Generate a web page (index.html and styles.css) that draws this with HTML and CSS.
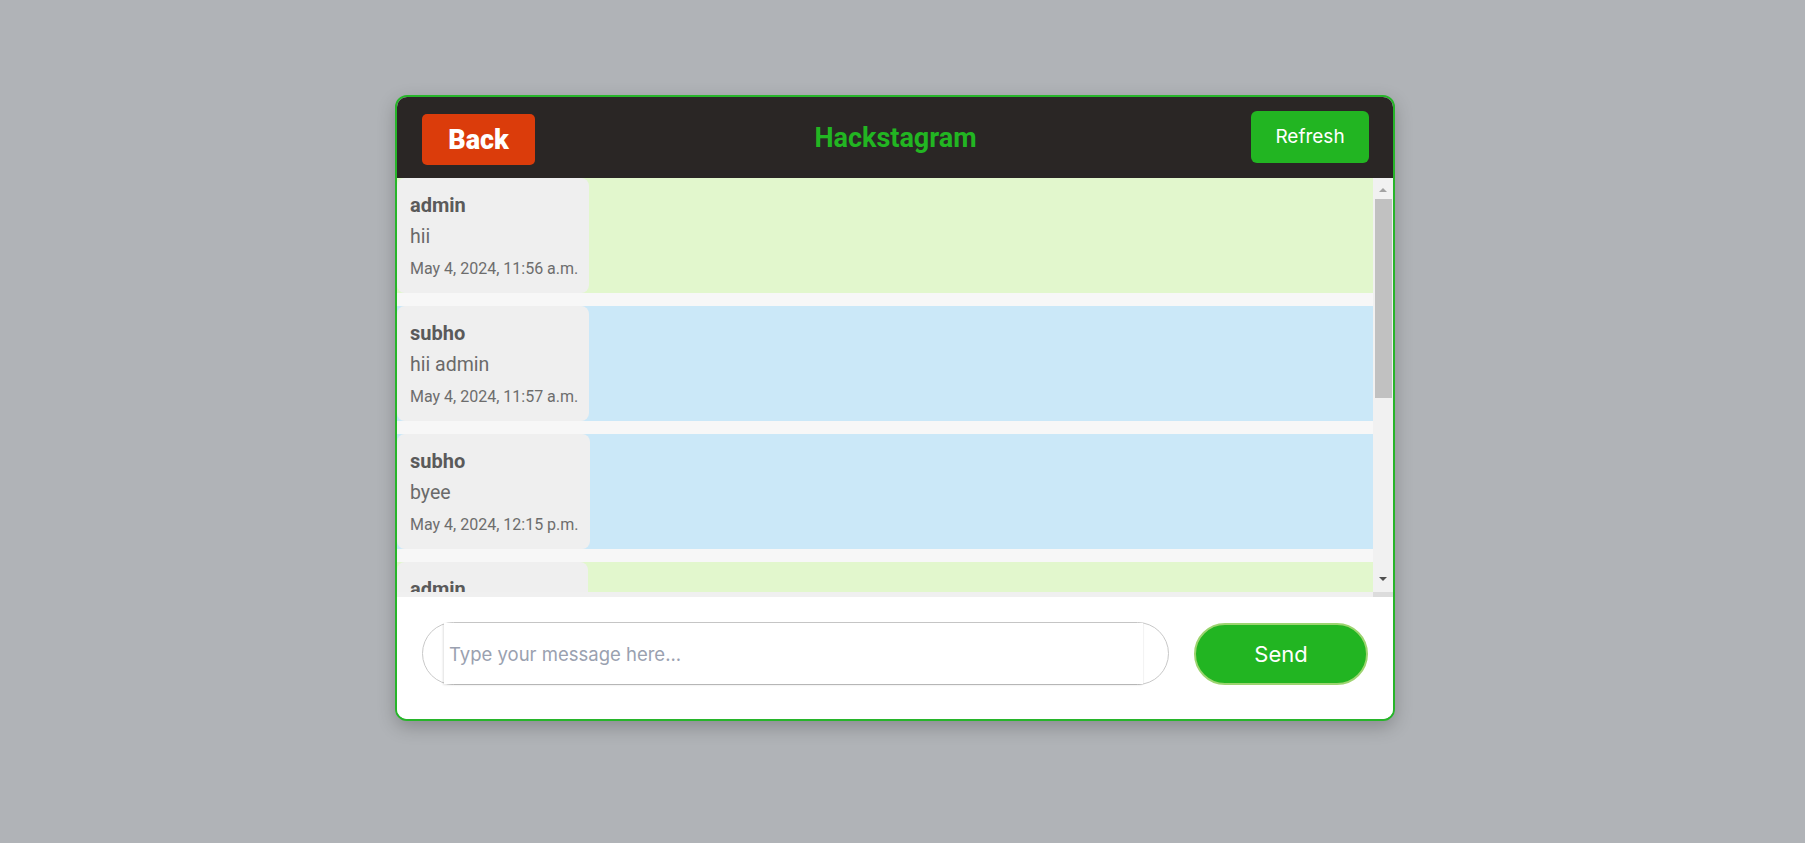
FILE: index.html
```html
<!DOCTYPE html>
<html lang="en">
<head>
<meta charset="utf-8">
<title>Hackstagram</title>
<link rel="stylesheet" href="styles.css">
</head>
<body>
<div class="chat">
  <header class="chat-header">
    <div class="hdr-left"><button class="btn-back">Back</button></div>
    <h1 class="title">Hackstagram</h1>
    <div class="hdr-right"><button class="btn-refresh">Refresh</button></div>
  </header>
  <div class="messages-wrap">
    <div class="messages-row">
      <div class="messages">
        <div class="msg msg-admin">
          <div class="card">
            <div class="user">admin</div>
            <div class="text">hii</div>
            <div class="time">May 4, 2024, 11:56 a.m.</div>
          </div>
        </div>
        <div class="msg msg-user">
          <div class="card">
            <div class="user">subho</div>
            <div class="text">hii admin</div>
            <div class="time">May 4, 2024, 11:57 a.m.</div>
          </div>
        </div>
        <div class="msg msg-user">
          <div class="card">
            <div class="user">subho</div>
            <div class="text">byee</div>
            <div class="time">May 4, 2024, 12:15 p.m.</div>
          </div>
        </div>
        <div class="msg msg-admin">
          <div class="card">
            <div class="user">admin</div>
          </div>
        </div>
      </div>
      <div class="scrollbar">
        <div class="sb-btn sb-up"><span class="arrow-up"></span></div>
        <div class="sb-track"><div class="sb-thumb"></div></div>
        <div class="sb-btn sb-down"><span class="arrow-down"></span></div>
      </div>
    </div>
    <div class="hstrip"><div class="hstrip-corner"></div></div>
  </div>
  <form class="composer">
    <div class="input-wrap">
      <input class="input" type="text" placeholder="Type your message here...">
    </div>
    <button type="button" class="btn-send">Send</button>
  </form>
</div>
</body>
</html>
```
FILE: styles.css
```css
* { box-sizing: border-box; }
html, body { margin: 0; padding: 0; }
body {
  background: #b0b3b7;
  font-family: Roboto, "Liberation Sans", sans-serif;
  height: 843px;
  overflow: hidden;
}
.chat {
  width: 1000px;
  height: 626px;
  margin: 95px 0 0 395px;
  border: 2px solid #27b52a;
  border-radius: 12px;
  overflow: hidden;
  background: #fff;
  box-shadow: 0 6px 18px rgba(0, 0, 0, 0.22);
  display: flex;
  flex-direction: column;
}
.chat-header {
  height: 81px;
  flex: none;
  background: #2a2625;
  display: grid;
  grid-template-columns: 1fr auto 1fr;
  align-items: center;
  padding: 0 24px 0 25px;
}
.hdr-left { display: flex; justify-content: flex-start; }
.hdr-right { display: flex; justify-content: flex-end; }
.btn-back {
  width: 113px;
  height: 51px;
  margin-top: 4px;
  border: none;
  border-radius: 5px;
  background: #db3c0b;
  color: #fff;
  font-family: Roboto, sans-serif;
  font-weight: 900;
  font-size: 27px;
  cursor: pointer;
}
.title {
  margin: 0;
  color: #22b522;
  font-family: Roboto, sans-serif;
  font-weight: 700;
  font-size: 27px;
}
.btn-refresh {
  width: 118px;
  height: 52px;
  margin-bottom: 2px;
  border: none;
  border-radius: 6px;
  background: #22b522;
  color: #fff;
  font-family: Inter, sans-serif;
  font-size: 19px;
  cursor: pointer;
}
.messages-wrap {
  flex: none;
  height: 419px;
  display: flex;
  flex-direction: column;
}
.messages-row {
  height: 414px;
  display: flex;
}
.messages {
  flex: 1;
  overflow: hidden;
  background: #f7f7f7;
}
.scrollbar {
  width: 20px;
  flex: none;
  background: #f1f1f1;
  display: flex;
  flex-direction: column;
}
.sb-btn {
  height: 20px;
  flex: none;
  display: flex;
  justify-content: center;
}
.sb-up { align-items: flex-start; padding-top: 10px; }
.sb-down { align-items: flex-start; padding-top: 5px; }
.arrow-up {
  width: 0;
  height: 0;
  border-left: 4px solid transparent;
  border-right: 4px solid transparent;
  border-bottom: 4px solid #a3a3a3;
}
.arrow-down {
  width: 0;
  height: 0;
  border-left: 4px solid transparent;
  border-right: 4px solid transparent;
  border-top: 4px solid #505050;
}
.sb-track {
  flex: 1;
  padding: 1px 1px 0 2px;
}
.sb-thumb {
  height: 199px;
  background: #c1c1c1;
}
.hstrip {
  height: 5px;
  background: #f0f0f0;
  display: flex;
  justify-content: flex-end;
}
.hstrip-corner {
  width: 20px;
  background: #dcdcdc;
}
.msg {
  height: 115px;
  margin-bottom: 13px;
  display: flex;
}
.msg-admin { background: #e2f7cd; }
.msg-user { background: #cbe8f8; }
.card {
  background: #efefef;
  border-radius: 8px;
  padding: 12px 11px 8px 13px;
  color: #666;
}
.msg-admin:last-child .card { width: 191px; }
.user {
  font-weight: 700;
  font-size: 20px;
  line-height: 31px;
  color: #5a5a5a;
}
.text {
  font-size: 19.5px;
  line-height: 31px;
  color: #6a6a6a;
}
.time {
  font-size: 16px;
  line-height: 33px;
  color: #6d6d6d;
  white-space: nowrap;
}
.composer {
  flex: 1;
  margin: 0;
  display: flex;
  align-items: center;
  gap: 25px;
  padding: 25px 25px 34px 25px;
  background: #fff;
}
.input-wrap {
  flex: 1;
  height: 63px;
  border: 1px solid #c8c8c8;
  border-radius: 32px;
  padding: 0 25px 0 21px;
  display: flex;
}
.input {
  flex: 1;
  height: 100%;
  border: none;
  outline: none;
  padding: 0 0 0 5px;
  background: #fff;
  font-family: Inter, sans-serif;
  font-size: 18.5px;
  color: #333;
  box-shadow: -1px 1px 2px rgba(0, 0, 0, 0.12), 1px 0 1px rgba(0, 0, 0, 0.04);
}
.input::placeholder { color: #9aa1b0; }
.btn-send {
  width: 174px;
  height: 62px;
  flex: none;
  border: 2px solid #9dd470;
  border-radius: 31px;
  background: #22b522;
  color: #fff;
  font-family: Inter, sans-serif;
  font-size: 22px;
  cursor: pointer;
}
```
